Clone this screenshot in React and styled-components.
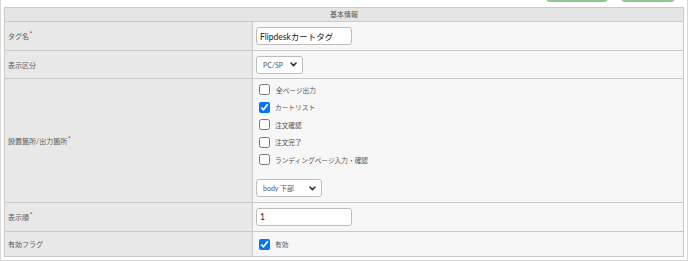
import React from "react";
import styled, { createGlobalStyle } from "styled-components";

const GlobalStyle = createGlobalStyle`
  html, body { margin: 0; padding: 0; background: #ffffff; }
  body {
    font-family: Lato, "Noto Sans CJK JP", "Noto Sans", sans-serif;
    color: #555;
  }
  * { box-sizing: border-box; }
`;

const Frame = styled.div`
  width: 688px;
  height: 261px;
  border: 1px solid #d8d8d8;
  border-top: none;
  padding: 0 3px 3px 3px;
  background: #fff;
`;

const Toolbar = styled.div`
  height: 2px;
  overflow: hidden;
  display: flex;
  justify-content: flex-end;
  align-items: flex-end;
  gap: 13px;
  padding-right: 9px;
  margin-bottom: 5px;
`;

const ToolButton = styled.div`
  flex: none;
  width: ${(p) => p.$w}px;
  height: 20px;
  border-bottom: 2px solid #92c792;
  border-radius: 0 0 4px 4px;
  background: #ffffff;
`;

const Table = styled.div`
  border: 1px solid #c9c9c9;
  display: flex;
  flex-direction: column;
`;

const Header = styled.div`
  height: 14px;
  border-bottom: 1px solid #c9c9c9;
  background: #e5e5e5;
  font-size: 7px;
  line-height: 13px;
  text-align: center;
  color: #555;
`;

const Row = styled.div`
  display: grid;
  grid-template-columns: 248px 1fr;
  height: ${(p) => p.$h}px;
  border-bottom: ${(p) => (p.$last ? "none" : "1px solid #c9c9c9")};
`;

const Label = styled.div`
  background: #e8e8e8;
  border-right: 1px solid #c9c9c9;
  display: flex;
  align-items: center;
  padding-left: 3px;
  font-size: 7px;
  color: #5a5a5a;
`;

const Required = styled.span`
  color: #e3434a;
  font-size: 8px;
  position: relative;
  top: -2px;
  margin-left: 0.5px;
`;

const Value = styled.div`
  background: #f7f7f7;
  display: flex;
  flex-direction: column;
  justify-content: ${(p) => (p.$top ? "flex-start" : "center")};
  align-items: flex-start;
  padding: ${(p) => (p.$top ? "5px 3px 0 3px" : "0 3px")};
`;

const TextInput = styled.input`
  width: 96px;
  height: 18px;
  border: 1px solid #bdbdbd;
  border-radius: 3px;
  background: #fff;
  padding: 0 0 0 3px;
  font-family: Lato, "Noto Sans CJK JP", sans-serif;
  font-size: 8.5px;
  color: #222;
  outline: none;
`;

const SelectWrap = styled.div`
  position: relative;
  width: ${(p) => p.$w}px;
  height: 18px;
  margin-top: ${(p) => p.$mt || 0}px;
`;

const Select = styled.select`
  appearance: none;
  -webkit-appearance: none;
  display: block;
  width: 100%;
  height: 18px;
  border: 1px solid #bdbdbd;
  border-radius: 3px;
  background: #fff;
  padding: 0 0 0 6px;
  line-height: 16px;
  font-family: Lato, "Noto Sans CJK JP", sans-serif;
  font-size: 7px;
  color: #555;
  outline: none;
`;

const Chevron = styled.svg`
  position: absolute;
  right: 6px;
  top: 6.5px;
  width: 7px;
  height: 5px;
  pointer-events: none;
`;

const CheckList = styled.div`
  display: flex;
  flex-direction: column;
  gap: 6.5px;
`;

const CheckItem = styled.label`
  display: flex;
  align-items: center;
  height: 11px;
  gap: ${(p) => (p.$wide ? 6 : 5)}px;
  font-size: 6.7px;
  color: #555;
  white-space: nowrap;
`;

const Checkbox = styled.input.attrs({ type: "checkbox" })`
  width: 11px;
  height: 11px;
  margin: 0 0 0 3px;
  flex: none;
  accent-color: #0a72f5;
`;

function SelectBox({ w, mt, value, options }) {
  return (
    <SelectWrap $w={w} $mt={mt}>
      <Select defaultValue={value}>
        {options.map((o) => (
          <option key={o}>{o}</option>
        ))}
      </Select>
      <Chevron viewBox="0 0 7 5">
        <path d="M1 1 L3.5 3.6 L6 1" fill="none" stroke="#333" strokeWidth="1.6" strokeLinecap="round" strokeLinejoin="round" />
      </Chevron>
    </SelectWrap>
  );
}

const places = [
  { label: "全ページ出力", checked: false, wide: true },
  { label: "カートリスト", checked: true },
  { label: "注文確認", checked: false },
  { label: "注文完了", checked: false },
  { label: "ランディングページ入力・確認", checked: false },
];

export default function App() {
  return (
    <>
      <GlobalStyle />
      <Frame>
        <Toolbar>
          <ToolButton $w={62} />
          <ToolButton $w={54} />
        </Toolbar>
        <Table>
          <Header>基本情報</Header>
          <Row $h={29}>
            <Label>
              タグ名<Required>*</Required>
            </Label>
            <Value>
              <TextInput defaultValue="Flipdeskカートタグ" />
            </Value>
          </Row>
          <Row $h={28}>
            <Label>表示区分</Label>
            <Value>
              <SelectBox w={47} value="PC/SP" options={["PC/SP", "PC", "SP"]} />
            </Value>
          </Row>
          <Row $h={124}>
            <Label>
              設置箇所/出力箇所<Required>*</Required>
            </Label>
            <Value $top>
              <CheckList>
                {places.map((p) => (
                  <CheckItem key={p.label} $wide={p.wide}>
                    <Checkbox defaultChecked={p.checked} />
                    {p.label}
                  </CheckItem>
                ))}
              </CheckList>
              <SelectBox w={66} mt={14} value="body 下部" options={["body 下部", "body 上部", "head"]} />
            </Value>
          </Row>
          <Row $h={29}>
            <Label>
              表示順<Required>*</Required>
            </Label>
            <Value>
              <TextInput defaultValue="1" />
            </Value>
          </Row>
          <Row $h={24} $last>
            <Label>有効フラグ</Label>
            <Value>
              <CheckItem>
                <Checkbox defaultChecked />
                有効
              </CheckItem>
            </Value>
          </Row>
        </Table>
      </Frame>
    </>
  );
}
